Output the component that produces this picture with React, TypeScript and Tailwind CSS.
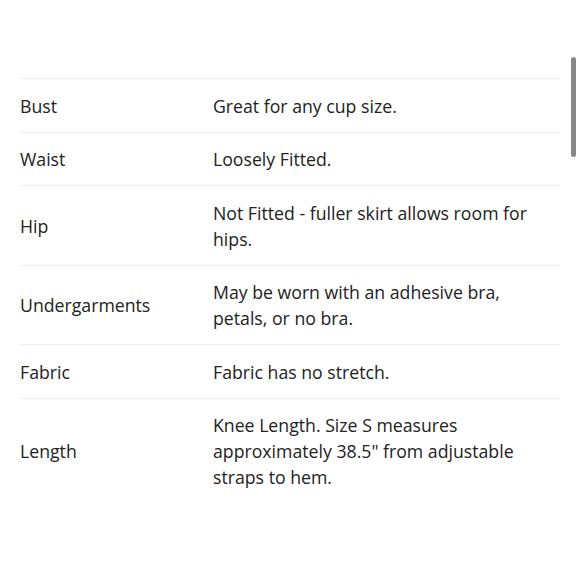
const rows: { label: string; value: string }[] = [
  { label: "Bust", value: "Great for any cup size." },
  { label: "Waist", value: "Loosely Fitted." },
  { label: "Hip", value: "Not Fitted - fuller skirt allows room for hips." },
  { label: "Undergarments", value: "May be worn with an adhesive bra, petals, or no bra." },
  { label: "Fabric", value: "Fabric has no stretch." },
  { label: "Length", value: "Knee Length. Size S measures approximately 38.5\" from adjustable straps to hem." },
];

export default function App() {
  return (
    <div className="relative h-[580px] w-[580px] overflow-hidden bg-white font-['Open_Sans',sans-serif] text-[17.7px] leading-[26px] text-[#222]">
      <div className="px-5 pt-[78px]">
        {rows.map((r) => (
          <div key={r.label} className="flex items-center border-t border-[#eeeeee] pt-[13.5px] pb-[13px]">
            <div className="w-[193px] shrink-0">{r.label}</div>
            <div className="w-[330px]">{r.value}</div>
          </div>
        ))}
      </div>
      <div className="absolute left-[571px] top-[57px] h-[100px] w-[5px] rounded-full bg-[#888]" />
    </div>
  );
}
